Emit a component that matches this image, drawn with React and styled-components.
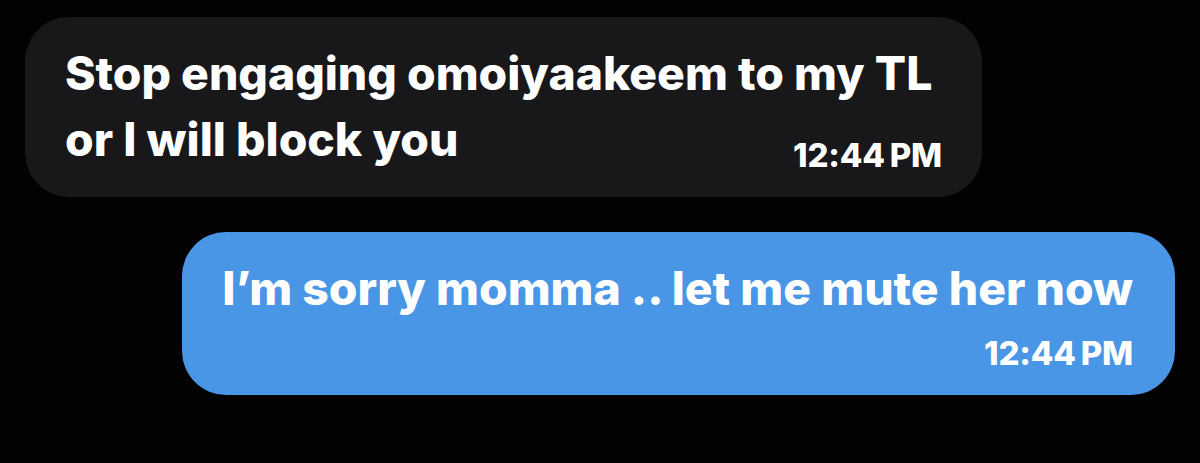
import styled, { createGlobalStyle } from "styled-components";

const GlobalStyle = createGlobalStyle`
  html, body {
    margin: 0;
    padding: 0;
    background: #020202;
  }
  * {
    box-sizing: border-box;
  }
`;

const Thread = styled.div`
  width: 1200px;
  height: 463px;
  padding: 17px 25px 0;
  display: flex;
  flex-direction: column;
  gap: 35px;
  font-family: Inter, "Noto Sans", sans-serif;
  overflow: hidden;
`;

const Bubble = styled.div`
  align-self: ${(props) => (props.$mine ? "flex-end" : "flex-start")};
  width: fit-content;
  max-width: ${(props) => (props.$mine ? "none" : "957px")};
  padding: 23px ${(props) => (props.$mine ? "42px" : "40px")} 22px 40px;
  border-radius: 44px;
  background: ${(props) => (props.$mine ? "#4a96e6" : "#18181b")};
  color: #ffffff;
`;

const Body = styled.p`
  margin: 0;
  font-size: 46.3px;
  line-height: 66px;
  font-weight: 800;
  letter-spacing: 0;
  white-space: ${(props) => (props.$mine ? "nowrap" : "normal")};
`;

const Time = styled.div`
  margin-top: ${(props) => (props.$inline ? "-37px" : "12px")};
  text-align: right;
  font-size: 33px;
  line-height: 40px;
  font-weight: 800;
  letter-spacing: -0.2px;
  word-spacing: -2px;
`;

const messages = [
  {
    id: 1,
    mine: false,
    text: "Stop engaging omoiyaakeem to my TL or I will block you",
    time: "12:44 PM",
  },
  {
    id: 2,
    mine: true,
    text: "I’m sorry momma .. let me mute her now",
    time: "12:44 PM",
  },
];

const App = () => {
  return (
    <>
      <GlobalStyle />
      <Thread>
        {messages.map((msg) => (
          <Bubble key={msg.id} $mine={msg.mine}>
            <Body $mine={msg.mine}>{msg.text}</Body>
            <Time $inline={!msg.mine}>{msg.time}</Time>
          </Bubble>
        ))}
      </Thread>
    </>
  );
};

export default App;
